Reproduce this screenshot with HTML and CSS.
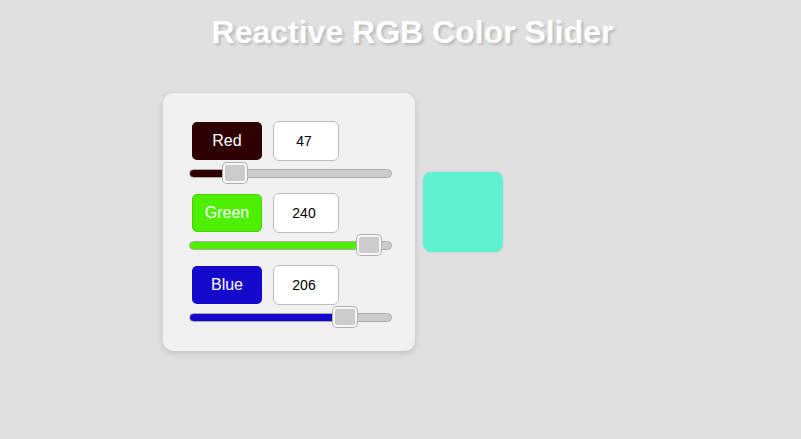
FILE: index.html
```html
<!DOCTYPE html>
<html>
<head>
<meta charset="utf-8">
<link rel="stylesheet" href="styles.css">
</head>
<body>
<h1 class="title">Reactive RGB Color Slider</h1>
<div class="main">
  <div class="card">
    <div class="group">
      <div class="row">
        <div class="label label-red">Red</div>
        <input class="num" type="text" value="47">
      </div>
      <div class="slider-wrap">
        <input class="slider slider-red" type="range" min="0" max="255" value="47" style="--fill: 45px">
      </div>
    </div>
    <div class="group">
      <div class="row">
        <div class="label label-green">Green</div>
        <input class="num" type="text" value="240">
      </div>
      <div class="slider-wrap">
        <input class="slider slider-green" type="range" min="0" max="255" value="240" style="--fill: 180px">
      </div>
    </div>
    <div class="group">
      <div class="row">
        <div class="label label-blue">Blue</div>
        <input class="num" type="text" value="206">
      </div>
      <div class="slider-wrap">
        <input class="slider slider-blue" type="range" min="0" max="255" value="206" style="--fill: 157px">
      </div>
    </div>
  </div>
  <div class="swatch"></div>
</div>
</body>
</html>
```
FILE: styles.css
```css
html, body {
  margin: 0;
  padding: 0;
}
body {
  background: #e0e0e0;
  font-family: "Liberation Sans", Arial, sans-serif;
  width: 801px;
  height: 439px;
  overflow: hidden;
}
.title {
  margin: 14px 0 0;
  padding-left: 24px;
  font-size: 32px;
  line-height: 37px;
  font-weight: bold;
  color: #ffffff;
  text-align: center;
  text-shadow: 2px 2px 3px rgba(0, 0, 0, 0.18);
}
.main {
  display: flex;
  align-items: flex-start;
  gap: 8px;
  padding-left: 163px;
  margin-top: 42px;
}
.card {
  width: 252px;
  box-sizing: border-box;
  background: #f1f1f1;
  border-radius: 10px;
  box-shadow: 0 2px 6px rgba(0, 0, 0, 0.15);
  padding: 28px 23px 20px 26px;
  display: flex;
  flex-direction: column;
  gap: 6px;
}
.group {
  display: flex;
  flex-direction: column;
}
.row {
  display: flex;
  align-items: center;
  gap: 11px;
  padding-left: 3px;
  height: 40px;
}
.label {
  width: 70px;
  height: 38px;
  border-radius: 5px;
  color: #ffffff;
  font-size: 16px;
  display: flex;
  align-items: center;
  justify-content: center;
  box-sizing: border-box;
}
.label-red { background: #2f0000; }
.label-green { background: #4ef000; border: 1px solid #45d000; }
.label-blue { background: #1508cd; }
.num {
  width: 66px;
  height: 40px;
  box-sizing: border-box;
  border: 1px solid #bdbdbd;
  border-radius: 6px;
  background: #ffffff;
  font-family: "Liberation Sans", Arial, sans-serif;
  font-size: 14px;
  color: #000;
  text-align: center;
  padding: 0 4px 0 0;
  margin: 0;
  outline: none;
}
.slider-wrap {
  margin-bottom: 2px;
  height: 24px;
  display: flex;
  align-items: center;
}
.slider {
  -webkit-appearance: none;
  appearance: none;
  width: 203px;
  height: 9px;
  margin: 0;
  padding: 0;
  border: 1px solid #aaaaaa;
  border-radius: 5px;
  box-sizing: border-box;
  outline: none;
}
.slider-red { background: linear-gradient(to right, #2f0000 0, #2f0000 var(--fill), #cccccc var(--fill)); }
.slider-green { background: linear-gradient(to right, #4ef000 0, #4ef000 var(--fill), #cccccc var(--fill)); }
.slider-blue { background: linear-gradient(to right, #1508cd 0, #1508cd var(--fill), #cccccc var(--fill)); }
.slider::-webkit-slider-thumb {
  -webkit-appearance: none;
  appearance: none;
  width: 24px;
  height: 20px;
  box-sizing: border-box;
  background: #cccccc;
  border: 2px solid #f7f7f7;
  border-radius: 4px;
  box-shadow: 0 0 0 1px #b0b0b0;
  cursor: pointer;
}
.swatch {
  width: 80px;
  height: 80px;
  margin-top: 79px;
  border-radius: 8px;
  background: #5ef2d0;
  box-shadow: 0 0 2px rgba(0, 0, 0, 0.12);
}
```
